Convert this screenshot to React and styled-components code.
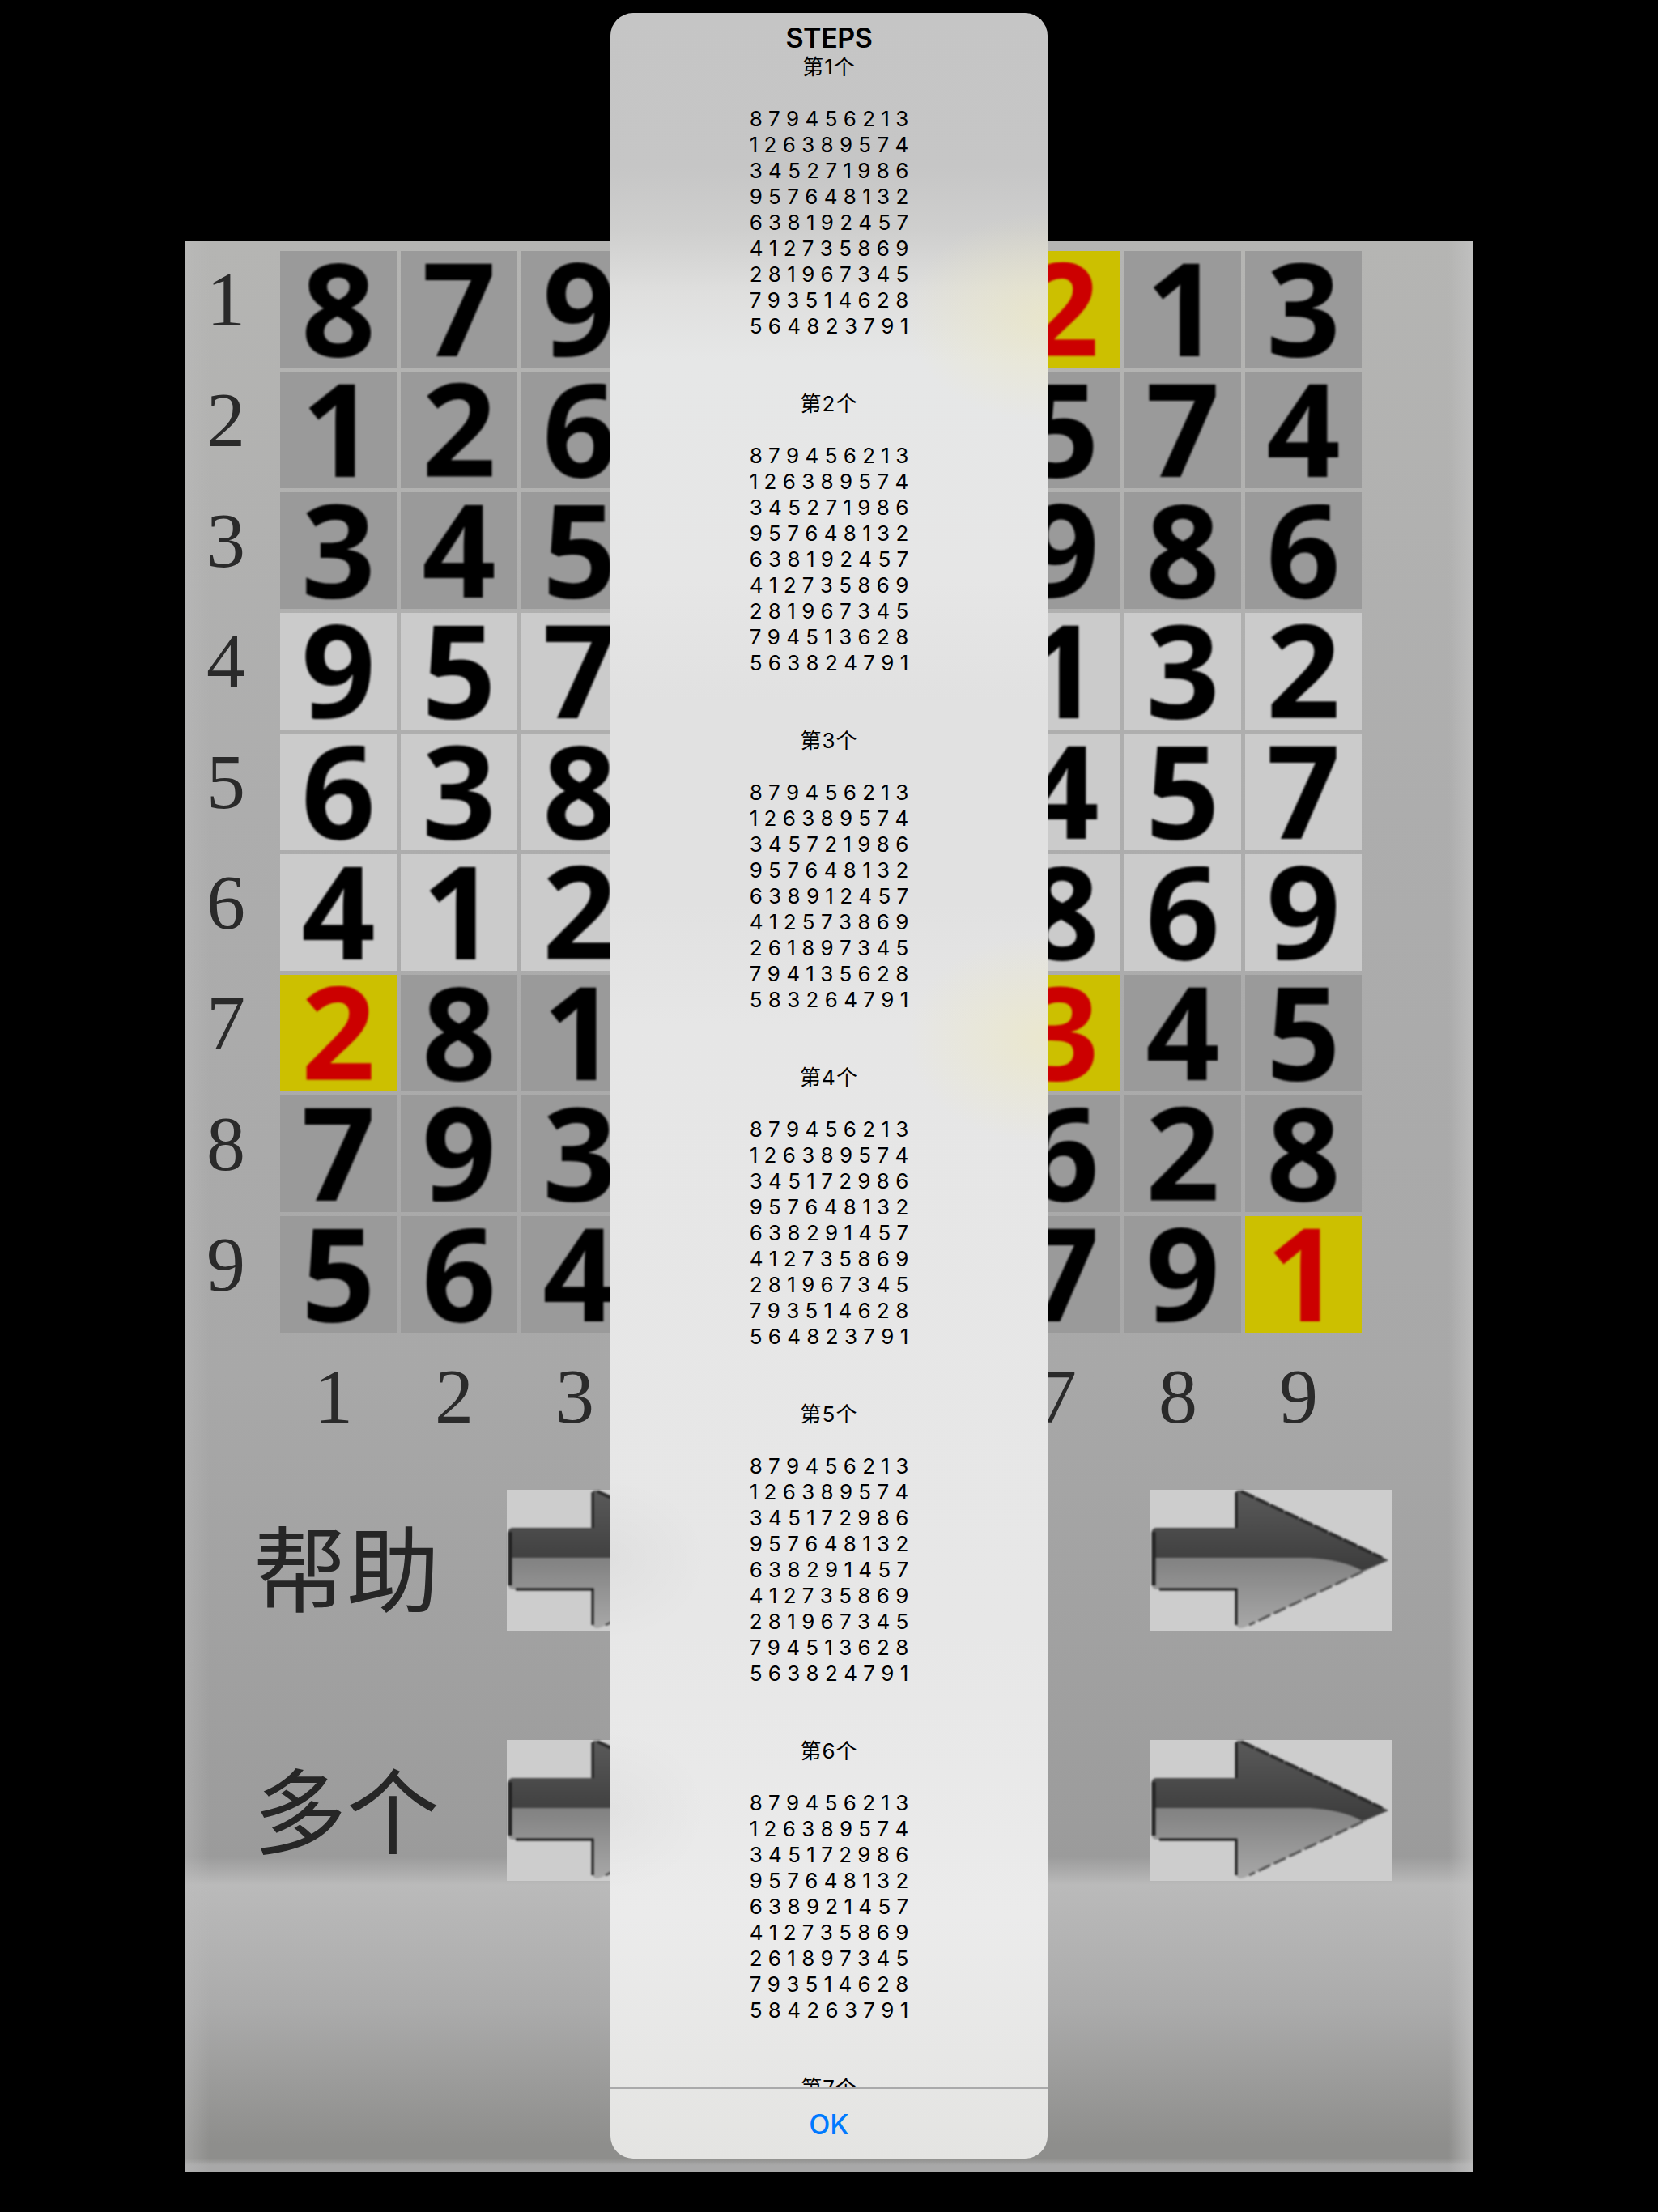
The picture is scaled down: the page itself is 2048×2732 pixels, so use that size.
import React from 'react';
import styled, { createGlobalStyle } from 'styled-components';

const BOARD = [
  '879456213',
  '126389574',
  '345271986',
  '957648132',
  '638192457',
  '412735869',
  '281967345',
  '793514628',
  '564823791',
];

const MARKED = ['0-6', '6-0', '6-6', '8-8'];

const STEPS = [
  BOARD,
  ['879456213', '126389574', '345271986', '957648132', '638192457', '412735869', '281967345', '794513628', '563824791'],
  ['879456213', '126389574', '345721986', '957648132', '638912457', '412573869', '261897345', '794135628', '583264791'],
  ['879456213', '126389574', '345172986', '957648132', '638291457', '412735869', '281967345', '793514628', '564823791'],
  ['879456213', '126389574', '345172986', '957648132', '638291457', '412735869', '281967345', '794513628', '563824791'],
  ['879456213', '126389574', '345172986', '957648132', '638921457', '412735869', '261897345', '793514628', '584263791'],
  [],
];

const GlobalStyle = createGlobalStyle`
  html, body {
    margin: 0;
    padding: 0;
    background: #000;
  }
`;

const Stage = styled.div`
  position: relative;
  width: 2048px;
  height: 2732px;
  padding-top: 298px;
  box-sizing: border-box;
  display: flex;
  justify-content: center;
  background: #000;
`;

const Panel = styled.div`
  width: 1590px;
  height: 2384px;
  padding-top: 12px;
  box-sizing: border-box;
  background:
    linear-gradient(to right, rgba(190, 190, 190, 0.4) 0, rgba(190, 190, 190, 0) 30px),
    linear-gradient(to left, rgba(196, 196, 196, 0.7) 0, rgba(190, 190, 190, 0) 30px),
    linear-gradient(
      to bottom,
      #b5b5b3 0,
      #adadad 700px,
      #a8a8a8 1400px,
      #9c9c9c 1960px,
      #9b9b9b 1995px,
      #bababa 2030px,
      #ababab 2180px,
      #8e8e8c 2350px,
      #8e8e8c 2368px,
      #a8a8a8 2376px
    );
`;

const BoardRow = styled.div`
  display: flex;
  margin-bottom: 5px;
`;

const RowLabel = styled.div`
  width: 117px;
  box-sizing: border-box;
  padding-top: 12px;
  padding-left: 26px;
  font: 400 96px/96px 'Liberation Serif', serif;
  color: #2a2a2a;
  filter: blur(0.7px);
`;

const Cells = styled.div`
  display: flex;
  gap: 5px;
`;

const Cell = styled.div`
  width: 144px;
  height: 144px;
  display: flex;
  align-items: center;
  justify-content: center;
  background: ${(p) => (p.$marked ? '#ccc000' : p.$light ? '#cbcbcb' : '#9a9a9a')};
`;

const Digit = styled.span`
  padding-bottom: 9px;
  font: 700 160px/144px 'Open Sans', 'Liberation Sans', sans-serif;
  color: ${(p) => (p.$marked ? '#cc0000' : '#000')};
  filter: blur(0.8px);
`;

const ColumnLabels = styled.div`
  display: flex;
  gap: 5px;
  margin: 31px 0 67px 117px;
`;

const ColumnLabel = styled.div`
  width: 144px;
  padding-right: 12px;
  box-sizing: border-box;
  text-align: center;
  font: 400 96px/96px 'Liberation Serif', serif;
  color: #2a2a2a;
  filter: blur(0.7px);
`;

const ActionRow = styled.div`
  display: grid;
  grid-template-columns: 397px 298px 497px 298px;
  height: 174px;
  margin-bottom: 135px;
`;

const ActionLabel = styled.div`
  margin-top: ${(p) => p.$drop}px;
  padding-left: 84px;
  font: 400 115px/174px 'Noto Sans CJK SC', sans-serif;
  color: #262626;
  filter: blur(0.6px);
`;

const ArrowBox = styled.div`
  background: #cdcdcd;
  height: 174px;
  svg {
    display: block;
    filter: blur(1px);
  }
`;

const Dialog = styled.div`
  position: absolute;
  top: 16px;
  left: 754px;
  width: 540px;
  height: 2650px;
  border-radius: 28px;
  overflow: hidden;
  display: flex;
  flex-direction: column;
  background:
    radial-gradient(175px 130px at 540px 376px, rgba(238, 232, 185, 0.55), rgba(238, 232, 185, 0)),
    radial-gradient(175px 130px at 540px 1267px, rgba(238, 232, 185, 0.55), rgba(238, 232, 185, 0)),
    radial-gradient(120px 100px at 0 1910px, rgba(0, 0, 0, 0.03), rgba(0, 0, 0, 0)),
    radial-gradient(120px 100px at 0 2220px, rgba(0, 0, 0, 0.03), rgba(0, 0, 0, 0)),
    linear-gradient(
      to bottom,
      #c5c5c5 0,
      #c6c6c6 190px,
      #cfcfce 270px,
      #dfdfde 345px,
      #e6e7e7 430px,
      #e6e6e6 700px,
      #e1e1e1 850px,
      #e1e1e1 1100px,
      #e6e6e6 1250px,
      #e7e7e7 2000px,
      #ebebeb 2350px,
      #e4e4e2 2650px
    );
  font-family: Inter, 'Noto Sans CJK SC', sans-serif;
  color: #000;
  text-align: center;
`;

const Title = styled.div`
  padding-top: 10px;
  font-size: 34px;
  line-height: 41px;
  font-weight: 600;
  letter-spacing: -0.4px;
`;

const Message = styled.div`
  flex: 1;
  overflow: hidden;
`;

const Step = styled.div`
  height: 416px;
  font-size: 26px;
  line-height: 32px;
`;

const StepTitle = styled.div`
  margin-bottom: 32px;
  letter-spacing: 1px;
`;

const Footer = styled.div`
  height: 88px;
  border-top: 2px solid rgba(60, 60, 67, 0.36);
  box-sizing: border-box;
  display: flex;
  align-items: center;
  justify-content: center;
  font-size: 34px;
  font-weight: 500;
  color: #007aff;
`;

function Arrow({ id }) {
  return (
    <svg width="298" height="174" viewBox="0 0 298 174">
      <defs>
        <linearGradient id={id + 'top'} x1="0" y1="0" x2="0" y2="1">
          <stop offset="0" stopColor="#5a5a5a" />
          <stop offset="1" stopColor="#3c3c3c" />
        </linearGradient>
        <linearGradient id={id + 'low'} x1="0" y1="0" x2="0" y2="1">
          <stop offset="0" stopColor="#5c5c5c" />
          <stop offset="1" stopColor="#a8a8a8" />
        </linearGradient>
      </defs>
      <path
        d="M2 52 Q2 47 9 47 H106 V3 Q106 0 112 1 L294 87 L116 170 Q108 173 106 167 V123 H9 Q2 123 2 118 Z"
        fill={`url(#${id}low)`}
      />
      <path
        d="M2 52 Q2 47 9 47 H106 V3 Q106 0 112 1 L294 87 L262 100 Q236 86 196 84 H2 Z"
        fill={`url(#${id}top)`}
      />
      <path d="M11 123 H106 V167 M106 47 V3" fill="none" stroke="#1c1c1c" strokeWidth="3" />
      <path d="M4 52 V118" fill="none" stroke="#222" strokeWidth="5" />
      <path d="M112 2 L286 84" fill="none" stroke="#2a2a2a" strokeWidth="4" strokeDasharray="18 2" />
      <path d="M262 101 L122 167" fill="none" stroke="#555" strokeWidth="3" strokeDasharray="16 5" />
    </svg>
  );
}

export default function App() {
  return (
    <>
      <GlobalStyle />
      <Stage>
        <Panel>
          {BOARD.map((row, r) => (
            <BoardRow key={r}>
              <RowLabel>{r + 1}</RowLabel>
              <Cells>
                {row.split('').map((value, c) => {
                  const marked = MARKED.includes(r + '-' + c);
                  const light = (Math.floor(r / 3) + Math.floor(c / 3)) % 2 === 1;
                  return (
                    <Cell key={c} $light={light} $marked={marked}>
                      <Digit $marked={marked}>{value}</Digit>
                    </Cell>
                  );
                })}
              </Cells>
            </BoardRow>
          ))}
          <ColumnLabels>
            {[1, 2, 3, 4, 5, 6, 7, 8, 9].map((n) => (
              <ColumnLabel key={n}>{n}</ColumnLabel>
            ))}
          </ColumnLabels>
          <ActionRow>
            <ActionLabel $drop={5}>帮助</ActionLabel>
            <ArrowBox>
              <Arrow id="helpPrev" />
            </ArrowBox>
            <div />
            <ArrowBox>
              <Arrow id="helpNext" />
            </ArrowBox>
          </ActionRow>
          <ActionRow>
            <ActionLabel $drop={-5}>多个</ActionLabel>
            <ArrowBox>
              <Arrow id="manyPrev" />
            </ArrowBox>
            <div />
            <ArrowBox>
              <Arrow id="manyNext" />
            </ArrowBox>
          </ActionRow>
        </Panel>
        <Dialog>
          <Title>STEPS</Title>
          <Message>
            {STEPS.map((lines, i) => (
              <Step key={i}>
                <StepTitle>第{i + 1}个</StepTitle>
                {lines.map((line, j) => (
                  <div key={j}>{line.split('').join(' ')}</div>
                ))}
              </Step>
            ))}
          </Message>
          <Footer>OK</Footer>
        </Dialog>
      </Stage>
    </>
  );
}
